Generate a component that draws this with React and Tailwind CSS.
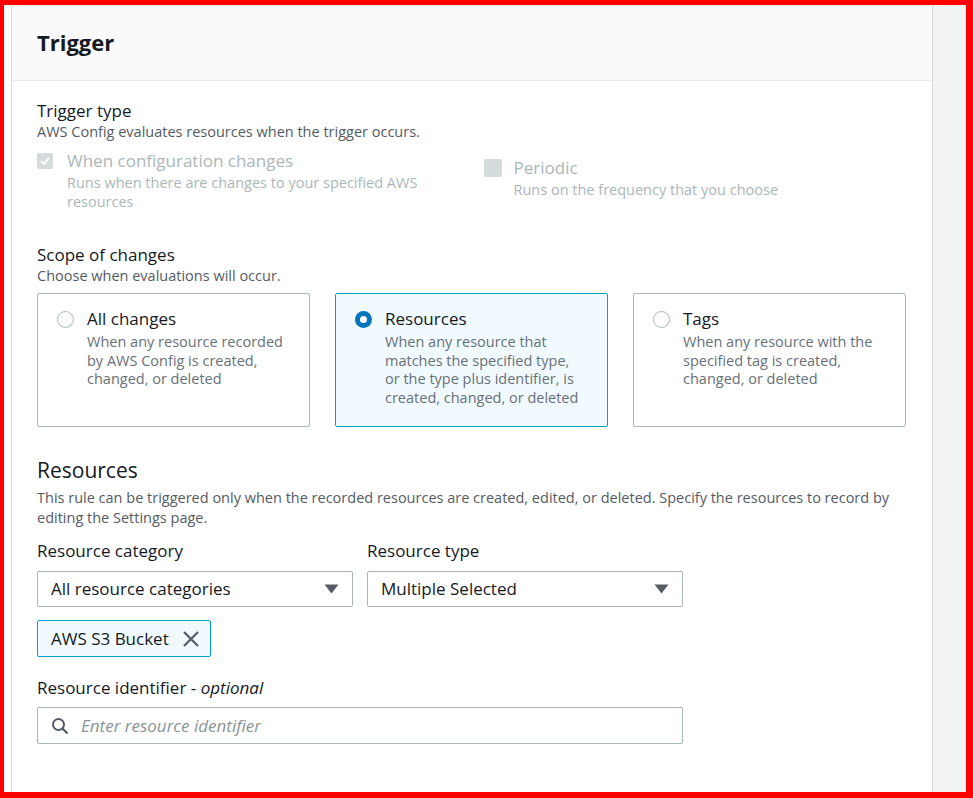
import { useState } from 'react'

const font = { fontFamily: '"Open Sans", "Noto Sans", sans-serif' }

const Radio = ({ checked }) =>
    checked ? (
        <span className="mt-[3px] w-[17px] h-[17px] shrink-0 rounded-full bg-[#0073bb] flex items-center justify-center">
            <span className="w-[7px] h-[7px] rounded-full bg-white" />
        </span>
    ) : (
        <span className="mt-[3px] w-[17px] h-[17px] shrink-0 rounded-full border border-[#aab7b8] bg-white" />
    )

const ScopeCard = ({ title, desc, checked, onClick }) => (
    <div
        onClick={onClick}
        className={`h-[134px] rounded-[2px] border pl-[19px] pr-[23px] pt-[14px] flex gap-[13px] cursor-pointer ${
            checked ? 'border-[#00a1c9] bg-[#f1faff]' : 'border-[#aab7b8] bg-white'
        }`}
    >
        <Radio checked={checked} />
        <div>
            <p className="text-[17px] leading-[22px] text-[#16191f]">{title}</p>
            <p className="mt-[3px] text-[14.5px] leading-[18.5px] text-[#687078]">{desc}</p>
        </div>
    </div>
)

const Caret = () => (
    <svg width="15" height="10" viewBox="0 0 15 10">
        <path d="M0.5 0.5 L14.5 0.5 L7.5 9.5 Z" fill="#545b64" />
    </svg>
)

const Select = ({ value }) => (
    <div className="h-[36px] rounded-[2px] border border-[#aab7b8] bg-white pl-[13px] pr-[13px] flex items-center justify-between">
        <span className="text-[17px] text-[#16191f]">{value}</span>
        <Caret />
    </div>
)

const App = () => {
    const [scope, setScope] = useState('resources')

    const cards = [
        { id: 'all', title: 'All changes', desc: 'When any resource recorded by AWS Config is created, changed, or deleted' },
        {
            id: 'resources',
            title: 'Resources',
            desc: 'When any resource that matches the specified type, or the type plus identifier, is created, changed, or deleted',
        },
        { id: 'tags', title: 'Tags', desc: 'When any resource with the specified tag is created, changed, or deleted' },
    ]

    return (
        <div
            style={font}
            className="w-[973px] h-[798px] border-t-[5px] border-l-[4px] border-r-[7px] border-b-[6px] border-[#ff0000] bg-white flex overflow-hidden"
        >
            <div className="w-[7px] shrink-0 bg-white" />

            {/* Panel */}
            <div className="w-[922px] shrink-0 border-l border-r border-t border-l-[#d5dbdb] border-r-[#d5dbdb] border-t-[#eaeded] flex flex-col">
                {/* Header */}
                <div className="h-[75px] bg-[#fafafa] border-b border-[#eaeded] pl-[25px] pb-[1px] flex items-center">
                    <h2 className="text-[22px] font-bold text-[#16191f]">Trigger</h2>
                </div>

                <div className="pl-[25px] pr-[26px] pt-[19px]">
                    {/* Trigger type */}
                    <p className="text-[17px] leading-[22px] text-[#16191f]">Trigger type</p>
                    <p className="text-[14.5px] leading-[20px] text-[#545b64]">
                        AWS Config evaluates resources when the trigger occurs.
                    </p>

                    <div className="grid grid-cols-2 gap-x-[20px] mt-[8px]">
                        <div className="flex gap-[14px]">
                            <span className="mt-[3px] w-[16px] h-[16px] shrink-0 rounded-[2px] bg-[#d5dbdb] flex items-center justify-center">
                                <svg width="12" height="12" viewBox="0 0 12 12">
                                    <path d="M2 6 L5 9 L10 3" fill="none" stroke="white" strokeWidth="2" />
                                </svg>
                            </span>
                            <div>
                                <p className="text-[17px] leading-[22px] text-[#aab7b8]">When configuration changes</p>
                                <p className="mt-[1px] text-[14.5px] leading-[19px] text-[#aab7b8] w-[360px]">
                                    Runs when there are changes to your specified AWS resources
                                </p>
                            </div>
                        </div>
                        <div className="flex gap-[12px] mt-[7px] pl-[2px]">
                            <span className="mt-[2px] w-[18px] h-[18px] shrink-0 rounded-[2px] bg-[#d5dbdb]" />
                            <div>
                                <p className="text-[17px] leading-[22px] text-[#aab7b8]">Periodic</p>
                                <p className="mt-[1px] text-[14.5px] leading-[19px] text-[#aab7b8]">
                                    Runs on the frequency that you choose
                                </p>
                            </div>
                        </div>
                    </div>

                    {/* Scope */}
                    <p className="mt-[33px] text-[17px] leading-[22px] text-[#16191f]">Scope of changes</p>
                    <p className="text-[14.5px] leading-[20px] text-[#545b64]">Choose when evaluations will occur.</p>

                    <div className="grid grid-cols-3 gap-[25px] mt-[7px]">
                        {cards.map((c) => (
                            <ScopeCard
                                key={c.id}
                                title={c.title}
                                desc={c.desc}
                                checked={scope === c.id}
                                onClick={() => setScope(c.id)}
                            />
                        ))}
                    </div>

                    {/* Resources */}
                    <h3 className="mt-[30px] text-[21px] leading-[26px] text-[#16191f]">Resources</h3>
                    <p className="mt-[5px] text-[14.5px] leading-[20px] text-[#545b64]">
                        This rule can be triggered only when the recorded resources are created, edited, or deleted. Specify the
                        resources to record by editing the Settings page.
                    </p>

                    <div className="flex gap-[14px] mt-[12px]">
                        <div className="w-[316px]">
                            <p className="text-[17px] leading-[22px] text-[#16191f]">Resource category</p>
                            <div className="mt-[9px]">
                                <Select value="All resource categories" />
                            </div>
                        </div>
                        <div className="w-[316px]">
                            <p className="text-[17px] leading-[22px] text-[#16191f]">Resource type</p>
                            <div className="mt-[9px]">
                                <Select value="Multiple Selected" />
                            </div>
                        </div>
                    </div>

                    {/* Token */}
                    <div className="mt-[13px] flex">
                        <div className="flex items-center h-[37px] rounded-[2px] border border-[#00a1c9] bg-[#f1faff] pl-[13px] pr-[10px] gap-[13px]">
                            <span className="text-[17px] text-[#16191f]">AWS S3 Bucket</span>
                            <svg width="18" height="18" viewBox="0 0 18 18">
                                <path d="M2 2 L16 16 M16 2 L2 16" stroke="#545b64" strokeWidth="2.2" fill="none" />
                            </svg>
                        </div>
                    </div>

                    {/* Identifier */}
                    <p className="mt-[20px] text-[17px] leading-[22px] text-[#16191f]">
                        Resource identifier - <i>optional</i>
                    </p>
                    <div className="mt-[8px] w-[646px] h-[37px] rounded-[2px] border border-[#aab7b8] bg-white flex items-center pl-[13px] gap-[12px]">
                        <svg width="18" height="18" viewBox="0 0 18 18">
                            <circle cx="7.5" cy="7.5" r="5.5" stroke="#545b64" strokeWidth="2" fill="none" />
                            <path d="M11.5 11.5 L16.5 16.5" stroke="#545b64" strokeWidth="2.2" />
                        </svg>
                        <input
                            style={font}
                            className="flex-1 outline-none text-[17px] italic placeholder:text-[#879596] bg-transparent"
                            placeholder="Enter resource identifier"
                        />
                    </div>
                </div>
            </div>

            <div className="flex-1 bg-[#f2f3f3]" />
        </div>
    )
}

export default App
